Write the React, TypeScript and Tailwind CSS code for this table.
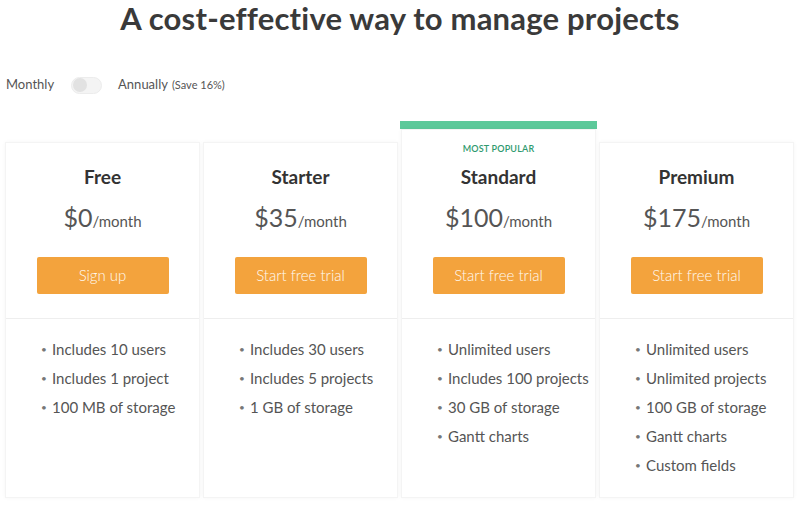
import React from "react";

const plans = [
  { name: "Free", price: "$0", cta: "Sign up", features: ["Includes 10 users", "Includes 1 project", "100 MB of storage"] },
  { name: "Starter", price: "$35", cta: "Start free trial", features: ["Includes 30 users", "Includes 5 projects", "1 GB of storage"] },
  { name: "Standard", price: "$100", cta: "Start free trial", popular: true, features: ["Unlimited users", "Includes 100 projects", "30 GB of storage", "Gantt charts"] },
  { name: "Premium", price: "$175", cta: "Start free trial", features: ["Unlimited users", "Unlimited projects", "100 GB of storage", "Gantt charts", "Custom fields"] },
];

export default function App() {
  return (
    <div className="w-[800px] h-[505px] bg-white overflow-hidden text-[#444]" style={{ fontFamily: "Lato, 'Open Sans', sans-serif" }}>
      <h1 className="text-center text-[31px] leading-[34px] pt-[1px] font-bold text-[#3a3a3a] tracking-[0.2px]">
        A cost-effective way to manage projects
      </h1>
      <div className="flex items-center mt-[34px] pl-[6px] h-[32px]">
        <span className="text-[13px] text-[#555]">Monthly</span>
        <div className="ml-[17px] w-[31px] h-[17px] rounded-full bg-[#f4f4f4] border border-[#ececec] flex items-center px-[1px]">
          <div className="w-[14px] h-[14px] rounded-full bg-[#e2e2e2]" />
        </div>
        <span className="ml-[16px] text-[13px] text-[#555]">Annually</span>
        <span className="ml-[4px] text-[11px] text-[#555]">(Save 16%)</span>
      </div>
      <div className="flex items-start gap-[3px] px-[5px] mt-[20px]">
        {plans.map((p) => (
          <div key={p.name} className={`w-[195px] flex flex-col ${p.popular ? "" : "mt-[21px]"}`}>
            {p.popular && <div className="h-[8px] bg-[#5cc99a] mx-[-1px]" />}
            <div className={`bg-white border border-[#f4f4f4] shadow-[0_0_4px_rgba(0,0,0,0.04)] flex flex-col ${p.popular ? "h-[369px]" : "h-[356px]"}`}>
              <div className={`flex flex-col items-center border-b border-[#eeeeee] pb-[24px] ${p.popular ? "pt-[12px]" : "pt-[22px]"}`}>
                {p.popular && (
                  <div className="text-[9px] leading-[13px] h-[13px] font-semibold text-[#2f9a6e] tracking-[0.2px] mb-[10px]">MOST POPULAR</div>
                )}
                <div className="text-[19px] leading-[24px] h-[24px] font-bold text-[#333]">{p.name}</div>
                <div className="mt-[13px] h-[30px] flex items-baseline justify-center text-[#555]">
                  <span className="text-[25px] leading-[30px]">{p.price}</span>
                  <span className="text-[15px] leading-[30px]">/month</span>
                </div>
                <button className="mt-[25px] w-[132px] h-[37px] rounded-[2px] bg-[#f3a33d] text-[#fffaf2] text-[15px] font-light">
                  {p.cta}
                </button>
              </div>
              <ul className="pt-[16px] pl-[35px]">
                {p.features.map((f) => (
                  <li key={f} className="flex items-center h-[29px] text-[15px] text-[#555]">
                    <span className="w-[11px] text-[10px] text-[#777]">•</span>
                    <span>{f}</span>
                  </li>
                ))}
              </ul>
            </div>
          </div>
        ))}
      </div>
    </div>
  );
}
